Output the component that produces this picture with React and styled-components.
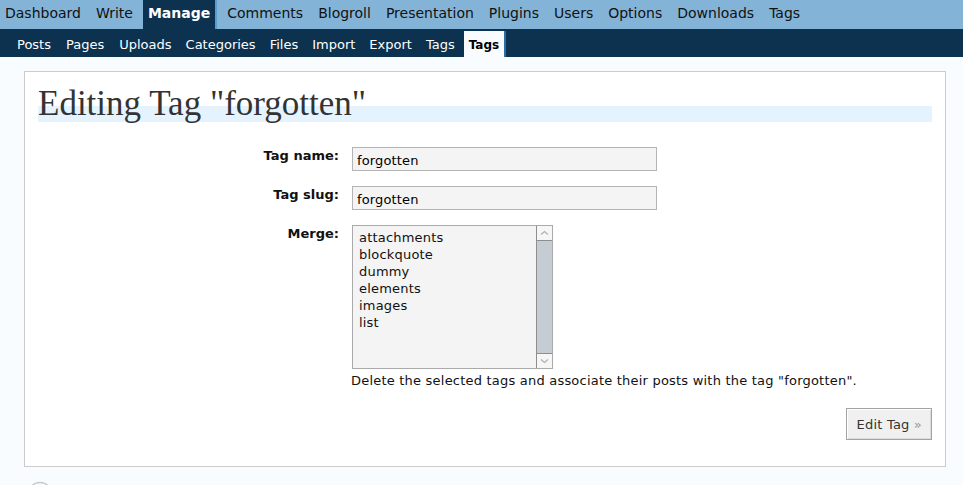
import React from "react";
import styled, { createGlobalStyle } from "styled-components";

const Global = createGlobalStyle`
  html, body { margin: 0; padding: 0; }
  body {
    background: #f9fcfe;
    font-family: "DejaVu Sans", "Liberation Sans", sans-serif;
    color: #000;
  }
`;

const TopNav = styled.ul`
  display: flex;
  margin: 0;
  padding: 0;
  list-style: none;
  height: 29px;
  background: #83b4d8;
`;

const TopItem = styled.li`
  font-size: 14px;
  line-height: 27px;
  height: 29px;
  box-sizing: border-box;
  padding: 0 5px;
  margin-right: 5px;
  color: ${(p) => (p.$current ? "#fff" : "#111")};
  font-weight: ${(p) => (p.$current ? "bold" : "normal")};
  background: ${(p) => (p.$current ? "#0d324f" : "transparent")};
  border-right: ${(p) => (p.$current ? "2px solid #5a9bd0" : "0")};
  white-space: nowrap;
`;

const SubNav = styled.ul`
  display: flex;
  margin: 0;
  padding: 0 0 0 10px;
  list-style: none;
  height: 28px;
  background: #0d324f;
`;

const SubItem = styled.li`
  font-size: 13px;
  line-height: 24px;
  padding: 4px 7px 0 ${(p) => (p.$wide ? "8px" : "7px")};
  height: 28px;
  box-sizing: border-box;
  color: #fff;
  white-space: nowrap;
`;

const SubCurrent = styled.li`
  font-size: 12px;
  font-weight: bold;
  line-height: 24px;
  margin-top: 2px;
  margin-left: 2px;
  padding: 2px 5px 0 5px;
  height: 26px;
  box-sizing: border-box;
  color: #000;
  background: #f9fcfe;
  border-right: 2px solid #2f6ea5;
  white-space: nowrap;
`;

const Card = styled.div`
  margin: 14px 17px 0 24px;
  background: #fff;
  border: 1px solid #cccccc;
  padding: 1px 13px 26px 13px;
`;

const Heading = styled.h2`
  margin: 28px 0 0;
  padding: 0;
  font-family: "Liberation Serif", "DejaVu Serif", serif;
  font-weight: normal;
  font-size: 35px;
  line-height: 5px;
  color: #333;
  border-bottom: 16px solid #e5f3ff;
  white-space: nowrap;
`;

const Form = styled.div`
  display: grid;
  grid-template-columns: 314px 1fr;
  row-gap: 15px;
  margin-top: 25px;
`;

const Label = styled.div`
  font-size: 13px;
  font-weight: bold;
  line-height: 17px;
  text-align: right;
  padding-right: 13px;
  color: #111;
`;

const Field = styled.div`
  display: flex;
  flex-direction: column;
  align-items: flex-start;
`;

const TextInput = styled.input`
  width: 305px;
  height: 24px;
  box-sizing: border-box;
  margin: 0;
  padding: 4px 4px 1px;
  border: 1px solid #b4b4b4;
  background: #f4f4f4;
  font-family: "DejaVu Sans", sans-serif;
  font-size: 13px;
  letter-spacing: 0.15px;
  color: #000;
  outline: none;
`;

const ListBox = styled.div`
  display: flex;
  width: 201px;
  height: 144px;
  box-sizing: border-box;
  border: 1px solid #aaaaaa;
  background: #f4f4f4;
`;

const ListItems = styled.ul`
  flex: 1;
  margin: 0;
  padding: 3px 0 0 6px;
  list-style: none;
`;

const ListItem = styled.li`
  font-size: 13px;
  line-height: 17px;
  letter-spacing: 0.2px;
  color: #111;
`;

const Scroll = styled.div`
  width: 15px;
  display: flex;
  flex-direction: column;
  background: #c5ccd3;
  border-left: 1px solid #8e8e8e;
`;

const ScrollBtn = styled.div`
  height: 14px;
  background: #f6f6f6;
  display: flex;
  align-items: center;
  justify-content: center;
  border-${(p) => (p.$down ? "top" : "bottom")}: 1px solid #8e8e8e;
  margin-top: ${(p) => (p.$down ? "auto" : "0")};
`;

const Help = styled.div`
  margin: 3px 0 0 -1px;
  font-size: 13px;
  line-height: 17px;
  letter-spacing: 0.21px;
  color: #111;
  white-space: nowrap;
`;

const Submit = styled.div`
  display: flex;
  justify-content: flex-end;
  margin-top: 19px;
`;

const Button = styled.button`
  height: 32px;
  box-sizing: border-box;
  padding: 0 9px 0 10px;
  border: 1px solid #a3a3a3;
  background: #f0f0f0;
  box-shadow: inset 1px 1px 0 #fff, inset -1px -1px 0 #dcdcdc;
  font-family: "DejaVu Sans", sans-serif;
  font-size: 13px;
  letter-spacing: 0.2px;
  color: #333;
  cursor: pointer;
`;

const Raquo = styled.span`
  color: #999;
`;

const Footer = styled.div`
  margin: 14px 0 0 27px;
  height: 40px;
`;

const Arrow = ({ down }) => (
  <svg width="9" height="6" viewBox="0 0 9 6">
    <path
      d={down ? "M1 1.5 L4.5 4.5 L8 1.5" : "M1 4.5 L4.5 1.5 L8 4.5"}
      fill="none"
      stroke="#b0b0b0"
      strokeWidth="1.2"
    />
  </svg>
);

const top = ["Dashboard", "Write", "Manage", "Comments", "Blogroll", "Presentation", "Plugins", "Users", "Options", "Downloads", "Tags"];
const sub = ["Posts", "Pages", "Uploads", "Categories", "Files", "Import", "Export", "Tags"];
const tags = ["attachments", "blockquote", "dummy", "elements", "images", "list"];

export default function App() {
  return (
    <>
      <Global />
      <TopNav>
        {top.map((t) => (
          <TopItem key={t} $current={t === "Manage"}>
            {t}
          </TopItem>
        ))}
      </TopNav>
      <SubNav>
        {sub.map((t, i) => (
          <SubItem key={t} $wide={i > 0 && i < 3}>
            {t}
          </SubItem>
        ))}
        <SubCurrent>Tags</SubCurrent>
      </SubNav>
      <Card>
        <Heading>Editing Tag "forgotten"</Heading>
        <Form>
          <Label>Tag name:</Label>
          <Field>
            <TextInput defaultValue="forgotten" />
          </Field>
          <Label>Tag slug:</Label>
          <Field>
            <TextInput defaultValue="forgotten" />
          </Field>
          <Label>Merge:</Label>
          <Field>
            <ListBox>
              <ListItems>
                {tags.map((t) => (
                  <ListItem key={t}>{t}</ListItem>
                ))}
              </ListItems>
              <Scroll>
                <ScrollBtn>
                  <Arrow />
                </ScrollBtn>
                <ScrollBtn $down>
                  <Arrow down />
                </ScrollBtn>
              </Scroll>
            </ListBox>
            <Help>Delete the selected tags and associate their posts with the tag "forgotten".</Help>
          </Field>
        </Form>
        <Submit>
          <Button>
            Edit Tag <Raquo>»</Raquo>
          </Button>
        </Submit>
      </Card>
      <Footer>
        <svg width="26" height="26" viewBox="0 0 26 26">
          <circle cx="13" cy="13" r="11.5" fill="none" stroke="#c8c8c8" strokeWidth="1.5" />
        </svg>
      </Footer>
    </>
  );
}
